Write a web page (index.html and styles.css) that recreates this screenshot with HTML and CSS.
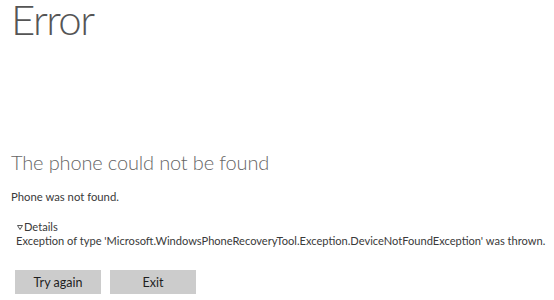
FILE: index.html
```html
<!DOCTYPE html>
<html lang="en">
<head>
<meta charset="utf-8">
<title>Error</title>
<link rel="stylesheet" href="styles.css">
</head>
<body>
<main class="page">
  <h1 class="title">Error</h1>
  <h2 class="subtitle">The phone could not be found</h2>
  <p class="message">Phone was not found.</p>
  <section class="details">
    <div class="details-toggle">
      <svg class="caret" width="6" height="5" viewBox="0 0 6 5" aria-hidden="true"><path d="M0.5 0.5 H5.5 L3 4.5 Z" fill="none" stroke="#444" stroke-width="0.9" stroke-linejoin="round"/></svg>
      <span>Details</span>
    </div>
    <p class="details-text">Exception of type 'Microsoft.WindowsPhoneRecoveryTool.Exception.DeviceNotFoundException' was thrown.</p>
  </section>
  <div class="actions">
    <button class="btn" type="button">Try again</button>
    <button class="btn" type="button">Exit</button>
  </div>
</main>
</body>
</html>
```
FILE: styles.css
```css
html, body {
  margin: 0;
  padding: 0;
  background: #ffffff;
}

body {
  font-family: "Lato", "Open Sans", "Liberation Sans", sans-serif;
  color: #3a3a3a;
}

.page {
  padding-left: 11px;
  width: 554px;
  height: 300px;
  box-sizing: border-box;
  overflow: hidden;
}

.title {
  margin: 0;
  font-size: 42px;
  line-height: 38px;
  font-weight: 300;
  letter-spacing: -1.6px;
  color: #555555;
}

.subtitle {
  margin: 112px 0 0;
  font-size: 20px;
  line-height: 24px;
  font-weight: 300;
  letter-spacing: -0.15px;
  color: #666666;
}

.message {
  margin: 15px 0 0;
  font-size: 11.3px;
  line-height: 16px;
}

.details {
  margin-top: 15px;
  padding-left: 5px;
  font-size: 11.1px;
  line-height: 14px;
}

.details-toggle {
  display: flex;
  align-items: center;
  gap: 1px;
}

.caret {
  display: block;
  margin-left: 1px;
}

.details-text {
  margin: 0;
  white-space: nowrap;
}

.actions {
  display: flex;
  gap: 9px;
  margin-top: 22px;
  padding-left: 4px;
}

.btn {
  width: 86px;
  height: 24px;
  border: none;
  background: #cccccc;
  color: #1e1e1e;
  font-family: inherit;
  font-size: 12.5px;
  padding: 0;
}
```
